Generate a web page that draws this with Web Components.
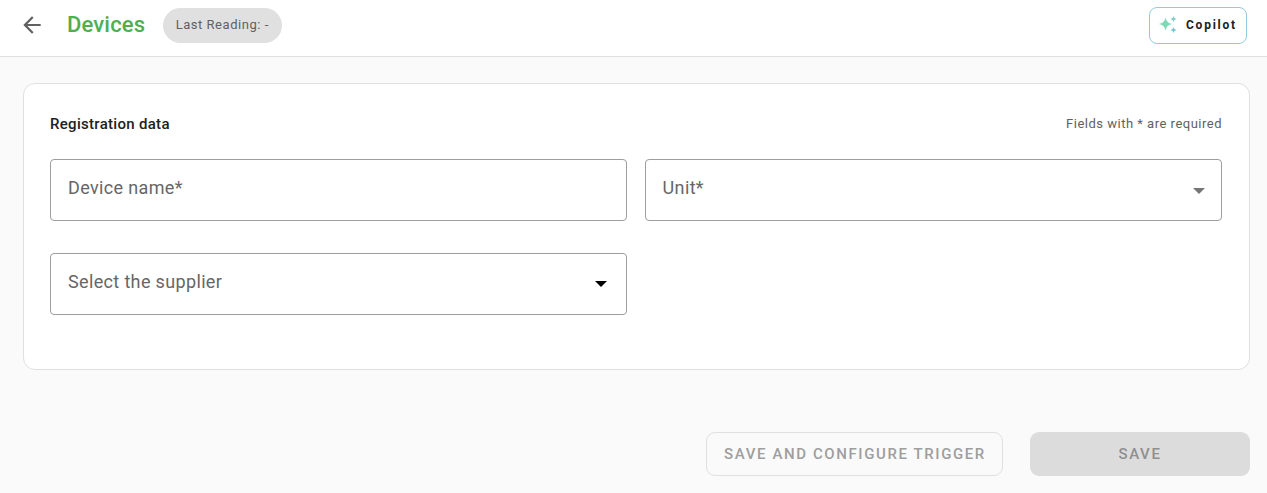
<!DOCTYPE html>
<html><head><meta charset="utf-8">
<style>
html,body{margin:0;height:100%;}
body{width:1267px;height:493px;overflow:hidden;background:#fafafa;font-family:Roboto,sans-serif;}
</style></head><body>
<app-shell>
  <app-header title-text="Devices" reading="Last Reading: -"></app-header>
  <form-card heading="Registration data" note="Fields with * are required">
    <form-field label="Device name*"></form-field>
    <form-field label="Unit*" arrow="#757575"></form-field>
    <form-field label="Select the supplier" arrow="#000"></form-field>
  </form-card>
  <action-bar></action-bar>
</app-shell>
<script>
function def(name,render){
  customElements.define(name,class extends HTMLElement{
    connectedCallback(){
      if(!this.shadowRoot)this.attachShadow({mode:'open'});
      this.shadowRoot.innerHTML=render(this);
    }
  });
}
def('app-shell',()=>`<style>:host{display:block}</style><slot></slot>`);
def('app-header',h=>`<style>
:host{display:flex;align-items:center;height:57px;box-sizing:border-box;background:#fff;border-bottom:1px solid #e0e0e0;padding:0 20px 5px 19px}
.back{width:26px;height:26px;display:block;flex:none;margin-bottom:1px}
h1{margin:0 0 2px 22px;font:500 22px/26px Roboto,sans-serif;color:#4caf50;letter-spacing:.15px}
.chip{margin-left:18px;height:35px;box-sizing:border-box;padding:0 13px 2px 12.5px;border-radius:18px;background:#e0e0e0;color:#616161;font:400 13px/33px Roboto,sans-serif;letter-spacing:.53px;white-space:nowrap}
.sp{flex:1}
</style>
<svg class="back" viewBox="0 0 24 24"><path fill="#616161" d="M20 11H7.83l5.59-5.59L12 4l-8 8 8 8 1.41-1.41L7.83 13H20z"/></svg>
<h1>${h.getAttribute('title-text')}</h1>
<span class="chip">${h.getAttribute('reading')}</span>
<span class="sp"></span>
<copilot-button></copilot-button>`);
def('copilot-button',()=>`<style>
:host{display:flex;align-items:center;width:98px;height:37px;box-sizing:border-box;border:1px solid #94cbdc;border-radius:8px;background:#fff;padding-left:9px}
svg{width:20px;height:20px;flex:none;display:block;margin-bottom:1px}
span{margin:0 0 2px 7px;font:700 12px/16px Roboto,sans-serif;letter-spacing:1.75px;color:#212121}
</style>
<svg viewBox="0 0 20 20">
<path fill="#7ed9b6" d="M6.5 2.5C7.4 6.4 9 8.1 13 9 9 9.9 7.4 11.6 6.5 15.5 5.6 11.6 4 9.9 0 9 4 8.1 5.6 6.4 6.5 2.5z"/>
<path fill="#7ccdc8" d="M14.5 0.8c.4 2 1.1 2.8 3.2 3.2-2.1.4-2.8 1.2-3.2 3.2-.4-2-1.1-2.8-3.2-3.2 2.1-.4 2.8-1.2 3.2-3.2z"/>
<path fill="#74c4d0" d="M14.5 11.8c.4 2 1.1 2.8 3.2 3.2-2.1.4-2.8 1.2-3.2 3.2-.4-2-1.1-2.8-3.2-3.2 2.1-.4 2.8-1.2 3.2-3.2z"/>
</svg><span>Copilot</span>`);
def('form-card',h=>`<style>
:host{display:block;margin:26px 17px 0 23px;height:287px;box-sizing:border-box;background:#fff;border:1px solid #e0e0e0;border-radius:12px;padding:27px 27px 0 26px}
.top{display:flex;justify-content:space-between;align-items:center;height:26px;margin-bottom:22px}
h2{margin:0;font:500 15px/20px Roboto,sans-serif;color:#212121;letter-spacing:.3px}
small{font:400 13px/16px Roboto,sans-serif;color:#616161;letter-spacing:.5px}
.grid{display:grid;grid-template-columns:577px 577px;column-gap:18px;row-gap:32px}
</style>
<div class="top"><h2>${h.getAttribute('heading')}</h2><small>${h.getAttribute('note')}</small></div>
<div class="grid"><slot></slot></div>`);
def('form-field',h=>{const a=h.getAttribute('arrow');return `<style>
:host{display:flex;align-items:center;height:62px;box-sizing:border-box;border:1px solid #9e9e9e;border-radius:4px;background:#fff;padding:0 ${a=='#757575'?16:19}px 0 ${a=='#757575'?16.6:17}px;color:#666;font:400 18px/24px Roboto,sans-serif;letter-spacing:.35px}
span{flex:1;margin-top:-5px}
i{display:block;width:0;height:0;border-left:6px solid transparent;border-right:6px solid transparent;border-top:6px solid ${a};margin-top:${a=='#000'?-1:1}px}
</style><span>${h.getAttribute('label')}</span>${a?'<i></i>':''}`;});
def('action-bar',()=>`<style>
:host{display:flex;justify-content:flex-end;margin:62px 17px 0 0;gap:27px}
button{height:44px;box-sizing:border-box;border-radius:9px;font:500 15px/20px Roboto,sans-serif;letter-spacing:1.6px;text-transform:uppercase;color:#9e9e9e;padding:0;margin:0}
.o{width:297px;background:transparent;border:1px solid #e0e0e0;padding-left:1px}
.f{width:220px;background:#dcdcdc;border:0;color:#8f8f8f}
</style><button class="o" disabled>Save and configure trigger</button><button class="f" disabled>Save</button>`);
</script>
</body></html>
